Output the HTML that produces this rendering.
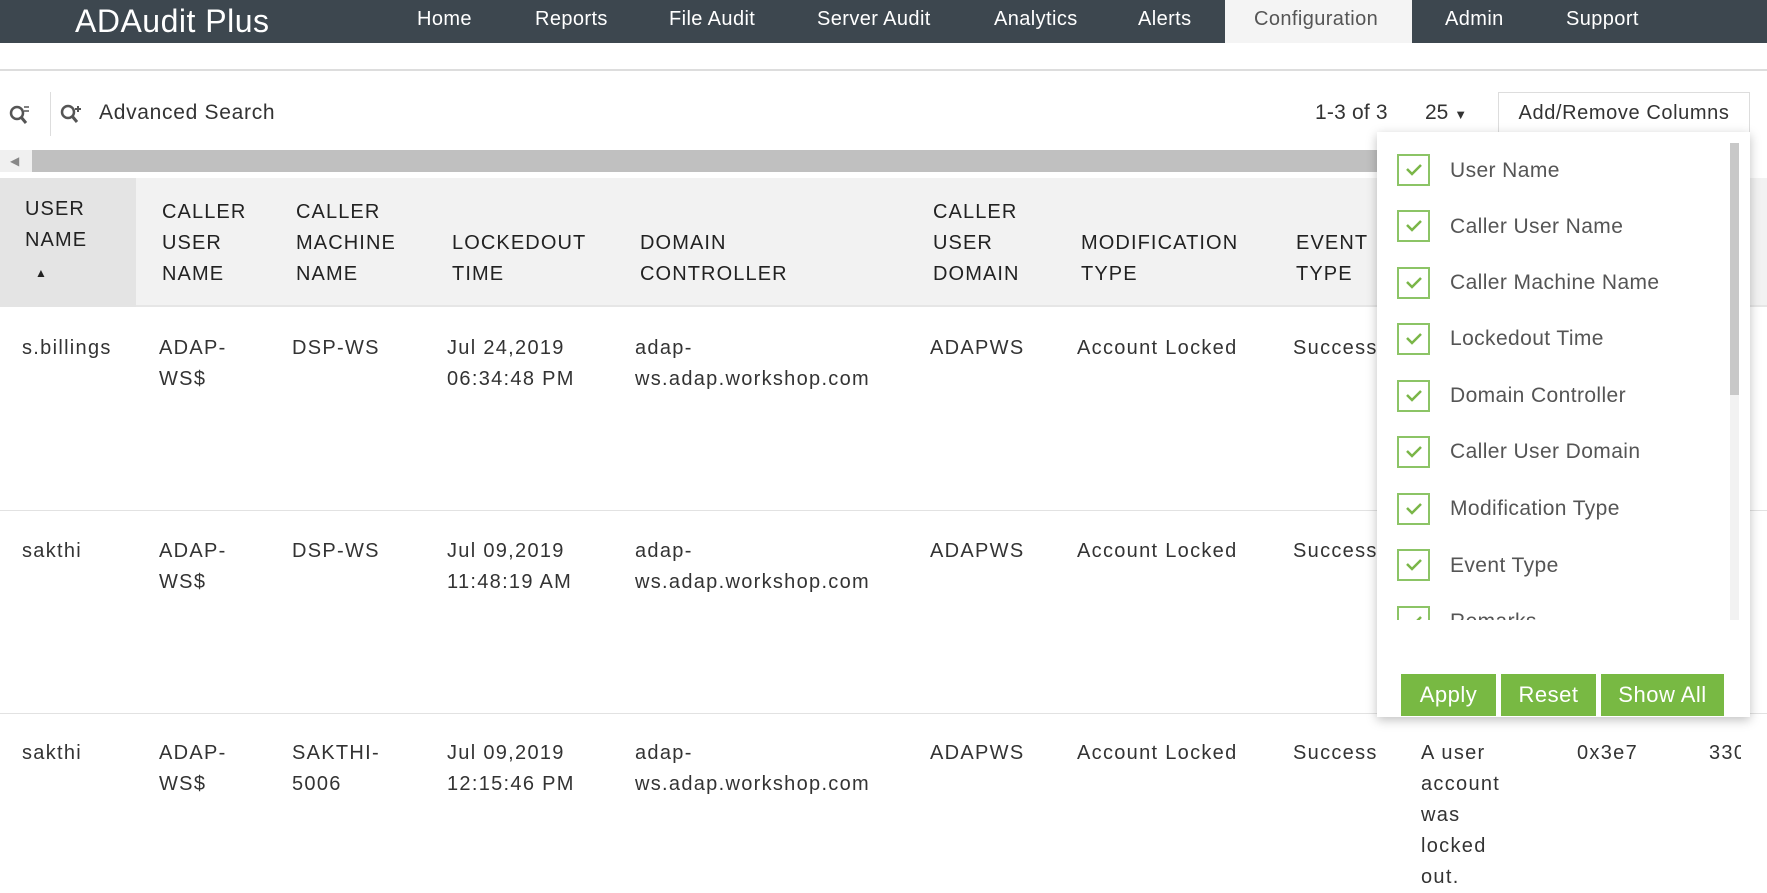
<!DOCTYPE html>
<html><head><meta charset="utf-8"><style>
*{margin:0;padding:0;box-sizing:border-box}
body{width:1767px;height:893px;overflow:hidden;background:#fff;font-family:"Liberation Sans",sans-serif;color:#333;position:relative}
.a{position:absolute;white-space:nowrap}
.nav{position:absolute;left:0;top:0;width:1767px;height:43px;background:#3d474f}
.nav .a{color:#fff;font-size:20px;top:8px;letter-spacing:0.4px}
.hd{font-size:20px;line-height:31px;color:#222;letter-spacing:1.1px}
.td{font-size:20px;line-height:31px;color:#333;letter-spacing:1.3px}
.cb{position:absolute;left:1397px;width:33px;height:32px;border:2px solid #8cc466;background:#fff}
.cb svg{position:absolute;left:6px;top:7px}
.it{position:absolute;left:1450px;font-size:21px;color:#555;letter-spacing:0.4px;white-space:nowrap}
.btn{position:absolute;top:674px;height:42px;background:#78b943;color:#fff;font-size:22px;text-align:center;line-height:42px;letter-spacing:0.5px}
</style></head><body>
<div class="nav">
<div class="a" style="left:75px;top:3px;font-size:32px;letter-spacing:0.5px">ADAudit Plus</div>
<div class="a" style="left:417px">Home</div>
<div class="a" style="left:535px">Reports</div>
<div class="a" style="left:669px">File Audit</div>
<div class="a" style="left:817px">Server Audit</div>
<div class="a" style="left:994px">Analytics</div>
<div class="a" style="left:1138px">Alerts</div>
<div class="a" style="left:1225px;top:0;width:187px;height:43px;background:#f4f4f4"></div>
<div class="a" style="left:1254px;color:#555">Configuration</div>
<div class="a" style="left:1445px">Admin</div>
<div class="a" style="left:1566px">Support</div>
</div>
<div class="a" style="left:0;top:69px;width:1767px;height:2px;background:#ddd"></div>
<svg class="a" style="left:8px;top:103px" width="24" height="24" viewBox="0 0 24 24"><circle cx="9" cy="10" r="6" fill="none" stroke="#555" stroke-width="2.5"/><path d="M13 14l5 6" stroke="#555" stroke-width="3"/><path d="M16 4h5M16 8h5" stroke="#555" stroke-width="1.5"/></svg>
<div class="a" style="left:50px;top:92px;width:1px;height:44px;background:#ddd"></div>
<svg class="a" style="left:59px;top:102px" width="28" height="24" viewBox="0 0 28 24"><circle cx="9" cy="10" r="6" fill="none" stroke="#555" stroke-width="2.5"/><path d="M13 14l5 6" stroke="#555" stroke-width="3"/><path d="M19 4v6M16 7h6" stroke="#555" stroke-width="2"/></svg>
<div class="a" style="left:99px;top:101px;font-size:21px;color:#333;letter-spacing:0.7px">Advanced Search</div>
<div class="a" style="left:1315px;top:101px;font-size:21px;letter-spacing:0.2px">1-3 of 3</div>
<div class="a" style="left:1425px;top:101px;font-size:21px">25 <span style="font-size:13px">&#9660;</span></div>
<div class="a" style="left:1498px;top:92px;width:252px;height:43px;border:1px solid #ddd;font-size:20px;text-align:center;line-height:41px;letter-spacing:0.6px">Add/Remove Columns</div>
<div class="a" style="left:0;top:150px;width:32px;height:22px;background:#f0f0f0;color:#888;font-size:12px;line-height:22px;padding-left:10px">&#9664;</div>
<div class="a" style="left:32px;top:150px;width:1345px;height:22px;background:#c0c0c0"></div>
<div class="a" style="left:0;top:178px;width:1767px;height:129px;background:#f2f2f2;border-bottom:2px solid #e6e6e6"></div>
<div class="a" style="left:0;top:178px;width:136px;height:129px;background:#e4e4e4"></div>
<div class="a hd" style="left:25px;top:194px">USER<br>NAME<br><span style="font-size:12px;padding-left:10px">&#9650;</span></div>
<div class="a hd" style="left:162px;top:197px">CALLER<br>USER<br>NAME</div>
<div class="a hd" style="left:296px;top:197px">CALLER<br>MACHINE<br>NAME</div>
<div class="a hd" style="left:452px;top:228px">LOCKEDOUT<br>TIME</div>
<div class="a hd" style="left:640px;top:228px">DOMAIN<br>CONTROLLER</div>
<div class="a hd" style="left:933px;top:197px">CALLER<br>USER<br>DOMAIN</div>
<div class="a hd" style="left:1081px;top:228px">MODIFICATION<br>TYPE</div>
<div class="a hd" style="left:1296px;top:228px">EVENT<br>TYPE</div>

<div class="a td" style="left:22px;top:333px">s.billings</div>
<div class="a td" style="left:159px;top:333px">ADAP-<br>WS$</div>
<div class="a td" style="left:292px;top:333px">DSP-WS</div>
<div class="a td" style="left:447px;top:333px">Jul 24,2019<br>06:34:48 PM</div>
<div class="a td" style="left:635px;top:333px">adap-<br>ws.adap.workshop.com</div>
<div class="a td" style="left:930px;top:333px">ADAPWS</div>
<div class="a td" style="left:1077px;top:333px">Account Locked</div>
<div class="a td" style="left:1293px;top:333px">Success</div>
<div class="a" style="left:0;top:510px;width:1767px;height:1px;background:#e2e2e2"></div>

<div class="a td" style="left:22px;top:536px">sakthi</div>
<div class="a td" style="left:159px;top:536px">ADAP-<br>WS$</div>
<div class="a td" style="left:292px;top:536px">DSP-WS</div>
<div class="a td" style="left:447px;top:536px">Jul 09,2019<br>11:48:19 AM</div>
<div class="a td" style="left:635px;top:536px">adap-<br>ws.adap.workshop.com</div>
<div class="a td" style="left:930px;top:536px">ADAPWS</div>
<div class="a td" style="left:1077px;top:536px">Account Locked</div>
<div class="a td" style="left:1293px;top:536px">Success</div>
<div class="a" style="left:0;top:713px;width:1767px;height:1px;background:#e2e2e2"></div>

<div class="a td" style="left:22px;top:738px">sakthi</div>
<div class="a td" style="left:159px;top:738px">ADAP-<br>WS$</div>
<div class="a td" style="left:292px;top:738px">SAKTHI-<br>5006</div>
<div class="a td" style="left:447px;top:738px">Jul 09,2019<br>12:15:46 PM</div>
<div class="a td" style="left:635px;top:738px">adap-<br>ws.adap.workshop.com</div>
<div class="a td" style="left:930px;top:738px">ADAPWS</div>
<div class="a td" style="left:1077px;top:738px">Account Locked</div>
<div class="a td" style="left:1293px;top:738px">Success</div>
<div class="a td" style="left:1421px;top:738px">A user<br>account<br>was<br>locked<br>out.</div>
<div class="a td" style="left:1577px;top:738px">0x3e7</div>
<div class="a td" style="left:1709px;top:738px;width:32px;overflow:hidden">3300</div>

<div class="a" style="left:1377px;top:132px;width:373px;height:585px;background:#fff;box-shadow:0 3px 10px rgba(0,0,0,0.25)"></div>
<div class="a" style="left:1377px;top:132px;width:373px;height:488px;overflow:hidden">
<div style="position:absolute;left:0;top:0;width:373px;height:600px">
<div class="cb" style="left:20px;top:22px"><svg width="18" height="14"><path d="M2 6l5 5 9-9" fill="none" stroke="#7ab648" stroke-width="2.5"/></svg></div><div class="it" style="left:73px;top:27px">User Name</div>
<div class="cb" style="left:20px;top:78px"><svg width="18" height="14"><path d="M2 6l5 5 9-9" fill="none" stroke="#7ab648" stroke-width="2.5"/></svg></div><div class="it" style="left:73px;top:83px">Caller User Name</div>
<div class="cb" style="left:20px;top:135px"><svg width="18" height="14"><path d="M2 6l5 5 9-9" fill="none" stroke="#7ab648" stroke-width="2.5"/></svg></div><div class="it" style="left:73px;top:139px">Caller Machine Name</div>
<div class="cb" style="left:20px;top:191px"><svg width="18" height="14"><path d="M2 6l5 5 9-9" fill="none" stroke="#7ab648" stroke-width="2.5"/></svg></div><div class="it" style="left:73px;top:195px">Lockedout Time</div>
<div class="cb" style="left:20px;top:248px"><svg width="18" height="14"><path d="M2 6l5 5 9-9" fill="none" stroke="#7ab648" stroke-width="2.5"/></svg></div><div class="it" style="left:73px;top:252px">Domain Controller</div>
<div class="cb" style="left:20px;top:304px"><svg width="18" height="14"><path d="M2 6l5 5 9-9" fill="none" stroke="#7ab648" stroke-width="2.5"/></svg></div><div class="it" style="left:73px;top:308px">Caller User Domain</div>
<div class="cb" style="left:20px;top:361px"><svg width="18" height="14"><path d="M2 6l5 5 9-9" fill="none" stroke="#7ab648" stroke-width="2.5"/></svg></div><div class="it" style="left:73px;top:365px">Modification Type</div>
<div class="cb" style="left:20px;top:417px"><svg width="18" height="14"><path d="M2 6l5 5 9-9" fill="none" stroke="#7ab648" stroke-width="2.5"/></svg></div><div class="it" style="left:73px;top:422px">Event Type</div>
<div class="cb" style="left:20px;top:474px"><svg width="18" height="14"><path d="M2 6l5 5 9-9" fill="none" stroke="#7ab648" stroke-width="2.5"/></svg></div><div class="it" style="left:73px;top:478px">Remarks</div>
</div>
<div style="position:absolute;left:353px;top:11px;width:9px;height:477px;background:#f2f2f2"></div>
<div style="position:absolute;left:353px;top:11px;width:9px;height:252px;background:#c8c8c8"></div>
</div>
<div class="btn" style="left:1401px;width:95px">Apply</div>
<div class="btn" style="left:1501px;width:95px">Reset</div>
<div class="btn" style="left:1601px;width:123px">Show All</div>
</body></html>
